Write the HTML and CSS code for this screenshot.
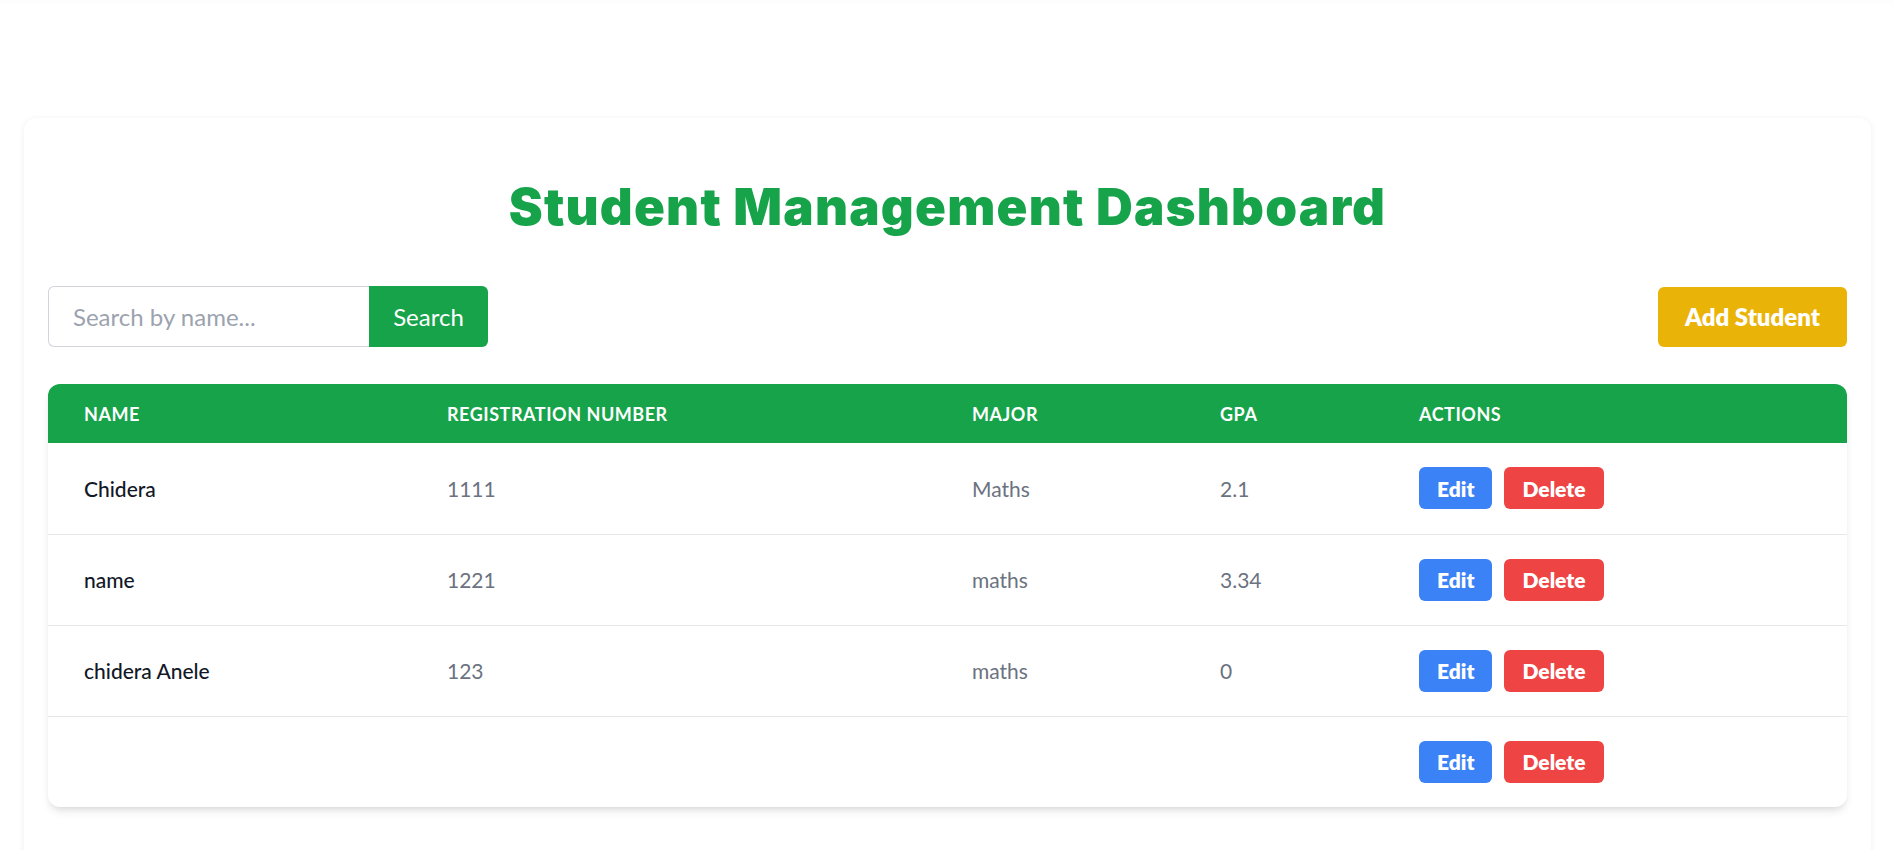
FILE: index.html
```html
<!DOCTYPE html>
<html lang="en">
<head>
<meta charset="utf-8">
<title>Student Management Dashboard</title>
<link rel="stylesheet" href="styles.css">
</head>
<body>
<div class="topbar"></div>
<main class="page">
  <section class="card">
    <h1 class="title">Student Management Dashboard</h1>
    <div class="toolbar">
      <form class="search">
        <input class="search-input" type="text" placeholder="Search by name...">
        <button class="search-btn" type="button">Search</button>
      </form>
      <button class="add-btn" type="button">Add Student</button>
    </div>
    <div class="table-wrap">
      <table class="students">
        <thead>
          <tr>
            <th class="c-name">Name</th>
            <th class="c-reg">Registration Number</th>
            <th class="c-major">Major</th>
            <th class="c-gpa">GPA</th>
            <th class="c-act">Actions</th>
          </tr>
        </thead>
        <tbody>
          <tr>
            <td class="name">Chidera</td>
            <td>1111</td>
            <td>Maths</td>
            <td>2.1</td>
            <td class="actions"><button class="btn edit">Edit</button><button class="btn del">Delete</button></td>
          </tr>
          <tr>
            <td class="name">name</td>
            <td>1221</td>
            <td>maths</td>
            <td>3.34</td>
            <td class="actions"><button class="btn edit">Edit</button><button class="btn del">Delete</button></td>
          </tr>
          <tr>
            <td class="name">chidera Anele</td>
            <td>123</td>
            <td>maths</td>
            <td>0</td>
            <td class="actions"><button class="btn edit">Edit</button><button class="btn del">Delete</button></td>
          </tr>
          <tr>
            <td class="name"></td>
            <td></td>
            <td></td>
            <td></td>
            <td class="actions"><button class="btn edit">Edit</button><button class="btn del">Delete</button></td>
          </tr>
        </tbody>
      </table>
    </div>
  </section>
</main>
</body>
</html>
```
FILE: styles.css
```css
* { box-sizing: border-box; }
html, body { margin: 0; padding: 0; }
body {
  background: #ffffff;
  font-family: Lato, "Open Sans", sans-serif;
  color: #111827;
  overflow: hidden;
}
.topbar {
  height: 4px;
  background: #fdfdfd;
  box-shadow: 0 1px 3px rgba(0,0,0,0.06);
}
.page {
  min-height: 846px;
  padding: 114px 23px 0 24px;
  background: #ffffff;
}
.card {
  min-height: 760px;
  background: #ffffff;
  border-radius: 12px;
  box-shadow: 0 1px 6px rgba(0,0,0,0.07);
  padding: 24px 24px 24px 24px;
}
.title {
  margin: 34px 0 49px 0;
  text-align: center;
  font-family: Inter, Lato, sans-serif;
  font-size: 51px;
  line-height: 1.2;
  font-weight: 900;
  letter-spacing: 1.2px;
  color: #16a34a;
}
.toolbar {
  display: flex;
  justify-content: space-between;
  align-items: center;
  margin-bottom: 37px;
}
.search {
  display: flex;
  margin: 0;
}
.search-input {
  width: 321px;
  height: 61px;
  border: 1px solid #d1d5db;
  border-right: none;
  border-radius: 6px 0 0 6px;
  padding: 0 24px;
  font-family: inherit;
  font-size: 24px;
  color: #111827;
  outline: none;
}
.search-input::placeholder { color: #9ca3af; }
.search-btn {
  width: 119px;
  height: 61px;
  border: none;
  border-radius: 0 6px 6px 0;
  background: #16a34a;
  color: #ffffff;
  font-family: inherit;
  font-size: 24px;
  padding: 0 24px;
}
.add-btn {
  height: 60px;
  border: none;
  border-radius: 6px;
  background: #eab308;
  color: #ffffff;
  font-family: inherit;
  font-weight: 800;
  font-size: 24px;
  padding: 0 27px;
}
.table-wrap {
  border-radius: 12px;
  overflow: hidden;
  box-shadow: 0 6px 10px -2px rgba(0,0,0,0.1), 0 3px 6px -3px rgba(0,0,0,0.1);
  background: #ffffff;
}
.students {
  width: 100%;
  border-collapse: collapse;
  table-layout: fixed;
}
.students th {
  background: #16a34a;
  color: #ffffff;
  text-align: left;
  font-size: 18px;
  font-weight: 700;
  text-transform: uppercase;
  letter-spacing: 0.03em;
  height: 59px;
  padding: 0 36px;
}
.c-name { width: 363px; }
.c-reg { width: 525px; }
.c-major { width: 248px; }
.c-gpa { width: 199px; }
.students td {
  height: 91px;
  padding: 0 36px;
  font-size: 21px;
  color: #6b7280;
  border-bottom: 1px solid #e5e7eb;
  vertical-align: middle;
}
.students tr:last-child td { border-bottom: none; height: 91px; }
.students td.name { color: #111827; font-weight: 500; }
.actions { white-space: nowrap; }
.btn {
  height: 42px;
  border: none;
  border-radius: 6px;
  padding: 0 18px;
  color: #ffffff;
  font-family: inherit;
  font-size: 21px;
  font-weight: 800;
  margin-right: 12px;
  vertical-align: middle;
}
.edit { background: #3b82f6; }
.del { background: #ef4444; }
```
